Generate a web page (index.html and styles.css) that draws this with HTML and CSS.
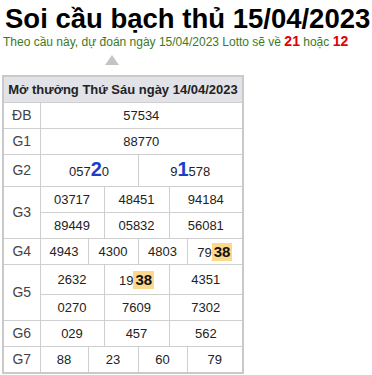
FILE: index.html
```html
<!DOCTYPE html>
<html>
<head>
<meta charset="utf-8">
<link rel="stylesheet" href="styles.css">
</head>
<body>
<h1 class="title">Soi cầu bạch thủ 15/04/2023</h1>
<p class="sub">Theo cầu này, dự đoán ngày 15/04/2023 Lotto sẽ về <b class="hot">21</b> hoặc <b class="hot">12</b></p>
<div class="arrow"></div>
<table class="kq">
  <colgroup>
    <col class="c0"><col class="c1"><col class="c2"><col class="c3"><col class="c4"><col class="c5"><col class="c6">
  </colgroup>
  <tr><th colspan="7" class="head">Mở thưởng Thứ Sáu ngày 14/04/2023</th></tr>
  <tr><td class="lbl">ĐB</td><td colspan="6">57534</td></tr>
  <tr><td class="lbl">G1</td><td colspan="6">88770</td></tr>
  <tr class="g2"><td class="lbl">G2</td><td colspan="3">057<b class="pos">2</b>0</td><td colspan="3">9<b class="pos">1</b>578</td></tr>
  <tr><td class="lbl" rowspan="2">G3</td><td colspan="2">03717</td><td colspan="2">48451</td><td colspan="2">94184</td></tr>
  <tr><td colspan="2">89449</td><td colspan="2">05832</td><td colspan="2">56081</td></tr>
  <tr><td class="lbl">G4</td><td>4943</td><td colspan="2">4300</td><td colspan="2">4803</td><td>79<b class="mark">38</b></td></tr>
  <tr class="g5"><td class="lbl" rowspan="2">G5</td><td colspan="2">2632</td><td colspan="2">19<b class="mark">38</b></td><td colspan="2">4351</td></tr>
  <tr><td colspan="2">0270</td><td colspan="2">7609</td><td colspan="2">7302</td></tr>
  <tr><td class="lbl">G6</td><td colspan="2">029</td><td colspan="2">457</td><td colspan="2">562</td></tr>
  <tr><td class="lbl">G7</td><td>88</td><td colspan="2">23</td><td colspan="2">60</td><td>79</td></tr>
</table>
</body>
</html>
```
FILE: styles.css
```css
body {
  margin: 0;
  padding: 0 0 0 2px;
  font-family: "Liberation Sans", Arial, sans-serif;
  background: #fff;
  color: #222;
}
.title {
  margin: 0;
  padding: 3px 0 0 3px;
  font-size: 27.5px;
  line-height: 32px;
  font-weight: bold;
  color: #000;
  white-space: nowrap;
}
.sub {
  margin: 0;
  padding-left: 1px;
  font-size: 12px;
  line-height: 13px;
  color: #3b7a1f;
  white-space: nowrap;
}
.hot {
  color: #e00000;
  font-size: 14px;
}
.arrow {
  width: 0;
  height: 0;
  margin: 6px 0 10px 103px;
  border-left: 7px solid transparent;
  border-right: 7px solid transparent;
  border-bottom: 10px solid #c4c4c4;
}
.kq {
  border-collapse: collapse;
  table-layout: fixed;
  width: 241px;
  border: 2px solid #c9c9c9;
  font-size: 13px;
}
.c0 { width: 37px; }
.c1 { width: 48px; }
.c2 { width: 16px; }
.c3 { width: 34px; }
.c4 { width: 31px; }
.c5 { width: 18px; }
.c6 { width: 56px; }
.kq td, .kq th {
  border: 1px solid #cfcfcf;
  height: 25px;
  padding: 0;
  text-align: center;
  line-height: 15px;
  color: #222;
}
.kq .head {
  background: #e2e2e9;
  font-weight: bold;
  font-size: 13px;
  color: #222;
}
.kq .lbl {
  color: #444;
  font-size: 14px;
}
.g2 td { height: 31px; }
.g5 td { height: 29px; }
.pos {
  color: #1a3fc8;
  font-size: 20px;
}
.mark {
  display: inline-block;
  background: #fcd88a;
  color: #111;
  font-size: 15px;
  line-height: 18px;
  padding: 0 2px;
}
```
